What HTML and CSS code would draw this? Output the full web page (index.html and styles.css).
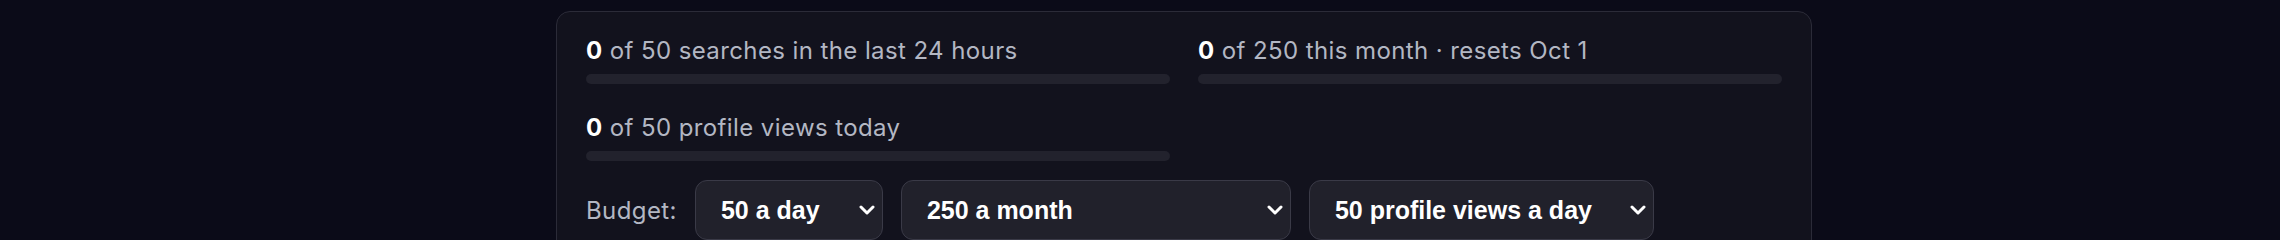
FILE: index.html
```html
<!DOCTYPE html>
<html>
<head>
  <meta charset="UTF-8">
  <title>Usage</title>
  <link rel="stylesheet" href="styles.css">
</head>
<body>
  <div class="usage-card">
    <div class="usage-grid">
      <div class="usage-item">
        <div class="usage-text"><b>0</b> of 50 searches in the last 24 hours</div>
        <div class="usage-bar"><span class="usage-fill" style="width: 0%"></span></div>
      </div>
      <div class="usage-item">
        <div class="usage-text"><b>0</b> of 250 this month · resets Oct 1</div>
        <div class="usage-bar"><span class="usage-fill" style="width: 0%"></span></div>
      </div>
      <div class="usage-item">
        <div class="usage-text"><b>0</b> of 50 profile views today</div>
        <div class="usage-bar"><span class="usage-fill" style="width: 0%"></span></div>
      </div>
    </div>

    <div class="budget-row">
      <span class="budget-label">Budget:</span>
      <div class="select-wrap select-day">
        <select id="daily-budget">
          <option selected>50 a day</option>
          <option>100 a day</option>
          <option>200 a day</option>
        </select>
        <svg class="chevron" viewBox="0 0 16 10" width="16" height="10"><polyline points="2,2 8,8 14,2" fill="none" stroke="#fff" stroke-width="3" stroke-linecap="round" stroke-linejoin="round"/></svg>
      </div>
      <div class="select-wrap select-month">
        <select id="monthly-budget">
          <option selected>250 a month</option>
          <option>500 a month</option>
          <option>Unlimited searches a month</option>
        </select>
        <svg class="chevron" viewBox="0 0 16 10" width="16" height="10"><polyline points="2,2 8,8 14,2" fill="none" stroke="#fff" stroke-width="3" stroke-linecap="round" stroke-linejoin="round"/></svg>
      </div>
      <div class="select-wrap select-profile">
        <select id="profile-budget">
          <option selected>50 profile views a day</option>
          <option>100 profile views a day</option>
        </select>
        <svg class="chevron" viewBox="0 0 16 10" width="16" height="10"><polyline points="2,2 8,8 14,2" fill="none" stroke="#fff" stroke-width="3" stroke-linecap="round" stroke-linejoin="round"/></svg>
      </div>
    </div>
  </div>
</body>
</html>
```

FILE: styles.css
```css
body {
  margin: 0;
  background-color: #0b0b18;
  font-family: Inter, "Noto Sans", sans-serif;
}

.usage-card {
  box-sizing: border-box;
  width: 1256px;
  margin: 11px 0 0 556px;
  padding: 23px 29px 24px;
  background-color: #12121d;
  border: 1px solid #2b2b38;
  border-radius: 14px;
}

.usage-grid {
  display: grid;
  grid-template-columns: 1fr 1fr;
  column-gap: 28px;
  row-gap: 28px;
}

.usage-text {
  font-size: 24px;
  line-height: 32px;
  letter-spacing: 0.4px;
  color: #b3b7c3;
}

.usage-text b {
  color: #ffffff;
  font-weight: 700;
}

.usage-bar {
  height: 10px;
  margin-top: 7px;
  border-radius: 5px;
  background-color: #22222d;
  overflow: hidden;
}

.usage-fill {
  display: block;
  height: 100%;
  background-color: #4285f4;
}

.budget-row {
  display: flex;
  align-items: center;
  gap: 18px;
  margin-top: 19px;
}

.budget-label {
  font-size: 24px;
  letter-spacing: 0.4px;
  color: #b3b7c3;
}

.select-wrap {
  position: relative;
}

.select-day { width: 188px; }
.select-month { width: 390px; }
.select-profile { width: 345px; }

.select-wrap select {
  appearance: none;
  -webkit-appearance: none;
  box-sizing: border-box;
  width: 100%;
  height: 60px;
  padding: 0 40px 0 25px;
  font-family: "Liberation Sans", Arial, sans-serif;
  font-size: 25px;
  font-weight: 700;
  color: #ffffff;
  background-color: #21212b;
  border: 1px solid #3a3a47;
  border-radius: 12px;
  outline: none;
}

.chevron {
  position: absolute;
  right: 8px;
  top: 25px;
  pointer-events: none;
}
```
